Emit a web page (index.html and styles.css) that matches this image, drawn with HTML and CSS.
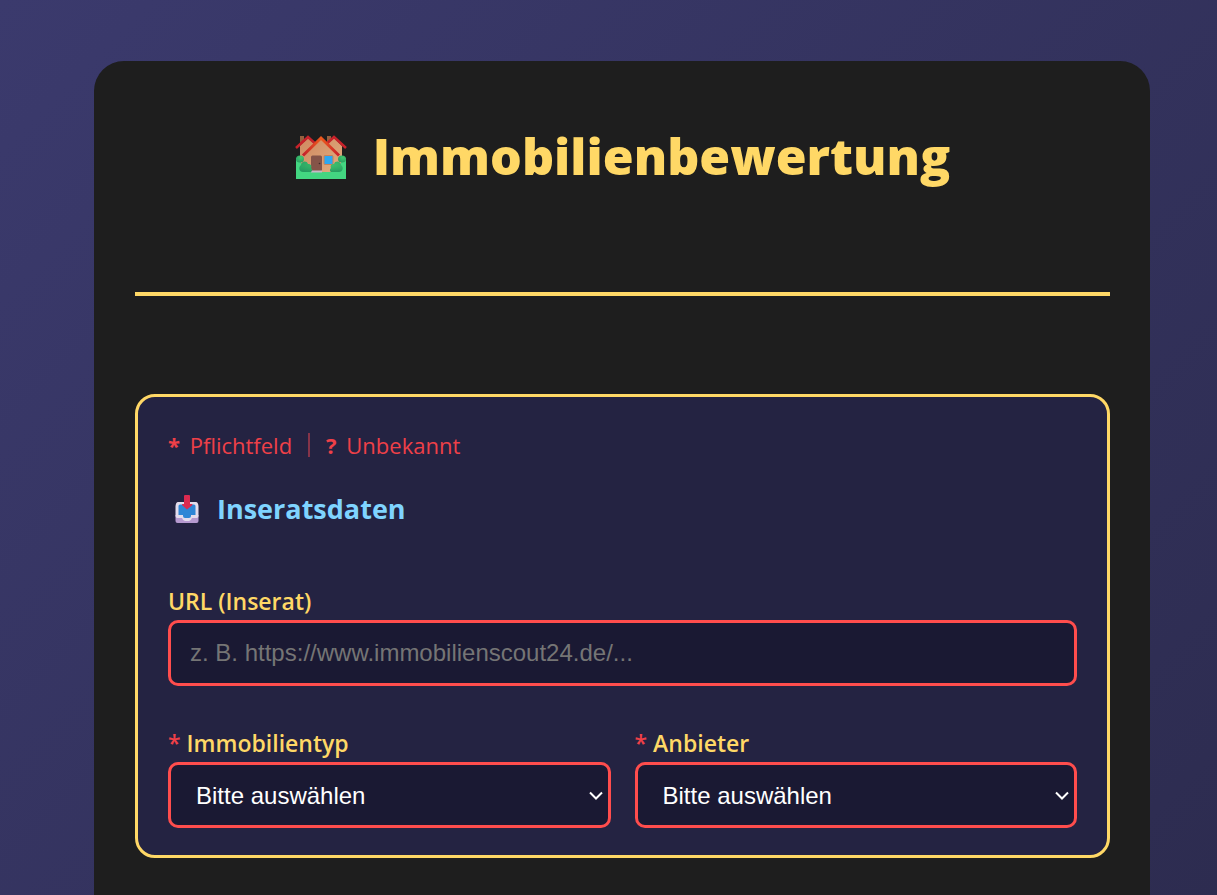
FILE: index.html
```html
<!DOCTYPE html>
<html lang="de">
<head>
<meta charset="utf-8">
<meta name="viewport" content="width=device-width, initial-scale=1">
<title>Immobilienbewertung</title>
<link rel="stylesheet" href="styles.css">
</head>
<body>
<main class="card">
  <header class="header">
    <h1 class="title">
      <svg class="title-icon" viewBox="0 0 52 44" aria-hidden="true">
        <defs>
          <linearGradient id="wall" x1="0" y1="0" x2="1" y2="1"><stop offset="0" stop-color="#d08a60"/><stop offset="1" stop-color="#e0ac80"/></linearGradient>
          <linearGradient id="roof" x1="0" y1="0" x2="1" y2="0"><stop offset="0" stop-color="#c3202c"/><stop offset=".5" stop-color="#ee5a1c"/><stop offset="1" stop-color="#c8202c"/></linearGradient>
          <radialGradient id="bush" cx=".6" cy=".3" r=".8"><stop offset="0" stop-color="#43c870"/><stop offset="1" stop-color="#259a60"/></radialGradient>
        </defs>
        <path fill="#96603f" d="M5 1h4v10H5zM32 1h4v9h-4z"/>
        <path fill="url(#wall)" d="M5 11 13 3l10 9v25H5zM29 11l10-8 8 8v26H29z"/>
        <path fill="none" stroke="#c8222a" stroke-width="2.500" d="M1 13 13 2l12 11M27 13 39 2l12 11"/>
        <path fill="#43d681" d="M1 23h3l4 9h36l4-9h3v21H1z"/>
        <path fill="url(#wall)" d="M10 18 26 4l16 14v19H10z"/>
        <path fill="none" stroke="url(#roof)" stroke-width="3" d="M8 20.500 26 3l18 17.500"/>
        <rect x="16" y="20.500" width="11" height="16" rx="1.500" fill="#855448"/>
        <circle cx="24.500" cy="28.500" r=".8" fill="#3f2926"/>
        <path fill="#c5b9c6" d="M16 35.500h11v2H16z"/>
        <rect x="29" y="20.500" width="9" height="9" rx="1" fill="#2ca7f2" stroke="#cc8055"/>
        <ellipse cx="5" cy="24" rx="4" ry="3.500" fill="url(#bush)"/>
        <ellipse cx="47" cy="24" rx="4" ry="3.500" fill="url(#bush)"/>
        <path fill="url(#bush)" d="M6 30c0-4 6-5 7-1 3 0 4 2 3 4 2 2 1 4-1 4H8c-4 0-5-5-2-7zM46 30c0-4-6-5-7-1-3 0-4 2-3 4-2 2-1 4 1 4h7c4 0 5-5 2-7z"/>
      </svg>
      Immobilienbewertung
    </h1>
  </header>

  <form class="panel">
    <p class="legend">
      <span><strong>*</strong> Pflichtfeld</span>
      <span class="divider"></span>
      <span><strong>?</strong> Unbekannt</span>
    </p>
    <h2 class="section-title">
      <svg class="section-icon" viewBox="0 0 24 28" aria-hidden="true">
        <path fill="#b69ad0" d="M.500 20h23v6q0 2-2 2h-19q-2 0-2-2z"/>
        <path fill="#e3dcec" d="M3 7h18q2 0 2.500 4v10q0 2-2 2H17q-1 3-3 3h-4q-2 0-3-3H2.500q-2 0-2-2V11Q1 7 3 7z"/>
        <path fill="#2e86d6" d="M5 9.500h14q1.500 0 1.500 1.500v9H16v1q0 2-2 2h-4q-2 0-2-2v-1H3.500v-9Q3.500 9.500 5 9.500z"/>
        <path fill="#dc2a50" d="M9 1q0-1 1-1h4q1 0 1 1v8h2q1 .5.300 1.300L12 14.500l-4.800-4.200Q6.500 9.500 7.500 9H9z"/>
      </svg>
      Inseratsdaten
    </h2>

    <div class="field">
      <label class="label" for="url">URL (Inserat)</label>
      <input class="control" id="url" type="url" placeholder="z. B. https://www.immobilienscout24.de/...">
    </div>

    <div class="row">
      <div class="field">
        <label class="label" for="typ"><span class="required">*</span> Immobilientyp</label>
        <select class="control" id="typ"><option>Bitte auswählen</option></select>
      </div>
      <div class="field">
        <label class="label" for="anbieter"><span class="required">*</span> Anbieter</label>
        <select class="control" id="anbieter"><option>Bitte auswählen</option></select>
      </div>
    </div>
  </form>
</main>
</body>
</html>
```
FILE: styles.css
```css
* {
  box-sizing: border-box;
}

body {
  margin: 0;
  min-height: 100vh;
  padding: 61px 67px 0 94px;
  background: linear-gradient(135deg, #3b3a6d, #2d2c50);
  color: #ffffff;
  font-family: "Segoe UI", "Open Sans", "Noto Sans", sans-serif;
  font-size: 23px;
  line-height: 32px;
}

.card {
  min-height: calc(100vh - 61px);
  padding: 40px 40px 37px 41px;
  border-radius: 30px 30px 0 0;
  background: #1e1e1e;
}

.header {
  padding: 24px 0 104px;
  border-bottom: 4px solid #ffd866;
  margin-bottom: 98px;
}

.title {
  display: flex;
  align-items: center;
  justify-content: center;
  gap: 26px;
  margin: 0;
  color: #ffd866;
  font-size: 50px;
  font-weight: 800;
  line-height: 63px;
}

.title-icon {
  width: 52px;
  height: 44px;
}

.panel {
  padding: 32px 30px 27px;
  border: 3px solid #ffd866;
  border-radius: 20px;
  background: #242342;
}

.legend {
  display: flex;
  align-items: center;
  gap: 16px;
  margin: 0 0 32px;
  color: #ef4048;
  font-size: 22px;
}

.legend strong {
  margin-right: 4px;
}

.divider {
  width: 2px;
  height: 24px;
  background: #863449;
}

.section-title {
  display: flex;
  align-items: center;
  gap: 18px;
  margin: 0 0 60px;
  padding-left: 7px;
  color: #7fd4ff;
  font-size: 27px;
  font-weight: 700;
  line-height: 32px;
}

.section-icon {
  width: 24px;
  height: 28px;
}

.field {
  display: flex;
  flex: 1;
  flex-direction: column;
  gap: 3px;
  min-width: 0;
}

.label {
  color: #ffd866;
  font-weight: 600;
}

.required {
  color: #ef4048;
}

.row {
  display: flex;
  gap: 24px;
  margin-top: 41px;
}

.control {
  width: 100%;
  height: 66px;
  padding: 0 19px;
  border: 3px solid #ff4d4d;
  border-radius: 10px;
  background-color: #1a1933;
  color: #ffffff;
  font-family: Arial, "Liberation Sans", sans-serif;
  font-size: 24px;
}

select.control {
  appearance: none;
  padding: 0 25px;
  background-image: url("data:image/svg+xml,%3Csvg xmlns='http://www.w3.org/2000/svg' width='14' height='9' viewBox='0 0 14 9'%3E%3Cpath d='M1 1.500 7 7.500 13 1.500' fill='none' stroke='white' stroke-width='2'/%3E%3C/svg%3E");
  background-position: right 5px center;
  background-repeat: no-repeat;
}

.control::placeholder {
  color: #757575;
}
```
